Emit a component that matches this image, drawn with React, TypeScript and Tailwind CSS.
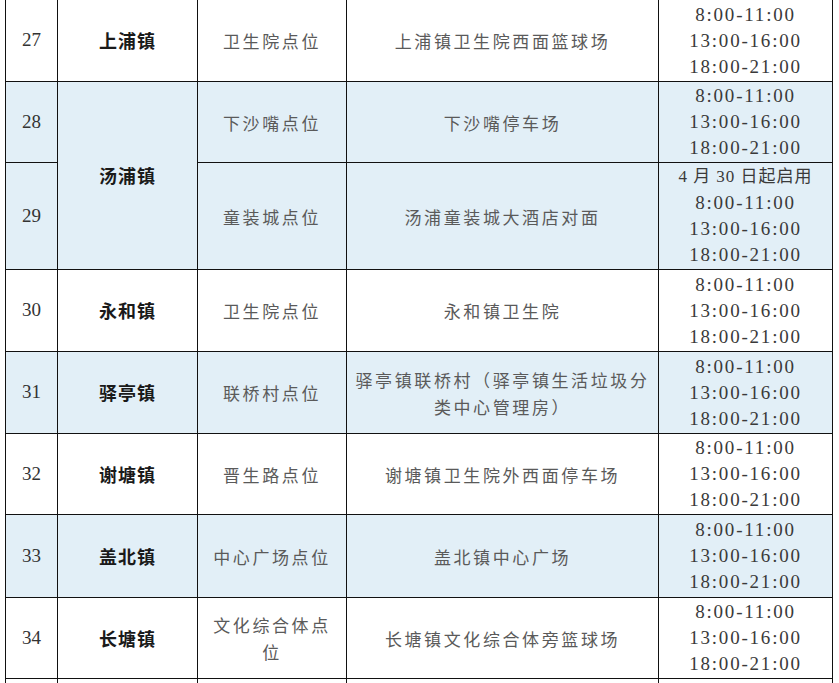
import React from 'react';

type Row = {
  no: string;
  town?: string;
  townSpan?: number;
  point: React.ReactNode;
  place: React.ReactNode;
  note?: string;
  blue: boolean;
  h: number;
};

const rows: Row[] = [
  { no: '27', town: '上浦镇', point: '卫生院点位', place: '上浦镇卫生院西面篮球场', blue: false, h: 82 },
  { no: '28', town: '汤浦镇', townSpan: 2, point: '下沙嘴点位', place: '下沙嘴停车场', blue: true, h: 81 },
  { no: '29', point: '童装城点位', place: '汤浦童装城大酒店对面', note: '4 月 30 日起启用', blue: true, h: 107 },
  { no: '30', town: '永和镇', point: '卫生院点位', place: '永和镇卫生院', blue: false, h: 82 },
  {
    no: '31',
    town: '驿亭镇',
    point: '联桥村点位',
    place: (
      <>
        驿亭镇联桥村（驿亭镇生活垃圾分
        <br />
        类中心管理房）
      </>
    ),
    blue: true,
    h: 82,
  },
  { no: '32', town: '谢塘镇', point: '晋生路点位', place: '谢塘镇卫生院外西面停车场', blue: false, h: 81 },
  { no: '33', town: '盖北镇', point: '中心广场点位', place: '盖北镇中心广场', blue: true, h: 83 },
  {
    no: '34',
    town: '长塘镇',
    point: (
      <>
        文化综合体点
        <br />
        位
      </>
    ),
    place: '长塘镇文化综合体旁篮球场',
    blue: false,
    h: 81,
  },
];

const times = ['8:00-11:00', '13:00-16:00', '18:00-21:00'];

const cell = 'border border-[#111] text-center align-middle p-0';
const cjk = "font-['Noto_Sans_CJK_SC',sans-serif]";

export default function App() {
  return (
    <div className="w-[839px] h-[683px] overflow-hidden bg-white font-['Liberation_Serif','Noto_Sans_CJK_SC',serif]">
      <table className="-mt-px ml-[5px] table-fixed border-collapse">
        <colgroup>
          <col className="w-[52px]" />
          <col className="w-[140px]" />
          <col className="w-[149px]" />
          <col className="w-[312px]" />
          <col className="w-[174px]" />
        </colgroup>
        <tbody>
          {rows.map((r) => (
            <tr key={r.no} className={r.blue ? 'bg-[#e2eff7]' : 'bg-white'} style={{ height: r.h }}>
              <td className={`${cell} text-[19px] text-[#333]`}>{r.no}</td>
              {r.town && (
                <td
                  rowSpan={r.townSpan ?? 1}
                  className={`${cell} text-[18px] font-bold tracking-[1px] text-[#1a1a1a] ${cjk}`}
                >
                  {r.town}
                </td>
              )}
              <td className={`${cell} text-[17px] leading-[27px] tracking-[2.6px] text-[#5a5a5a] ${cjk}`}>
                {r.point}
              </td>
              <td className={`${cell} text-[17px] leading-[27px] tracking-[2.6px] text-[#5a5a5a] ${cjk}`}>
                {r.place}
              </td>
              <td className={`${cell} text-[19px] leading-[26px] tracking-[1.8px] text-[#3a3a3a]`}>
                {r.note && <div className="text-[17px] tracking-[1px]">{r.note}</div>}
                {times.map((t) => (
                  <div key={t}>{t}</div>
                ))}
              </td>
            </tr>
          ))}
          <tr className="bg-white" style={{ height: 30 }}>
            <td className={cell}></td>
            <td className={cell}></td>
            <td className={cell}></td>
            <td className={cell}></td>
            <td className={cell}></td>
          </tr>
        </tbody>
      </table>
    </div>
  );
}
